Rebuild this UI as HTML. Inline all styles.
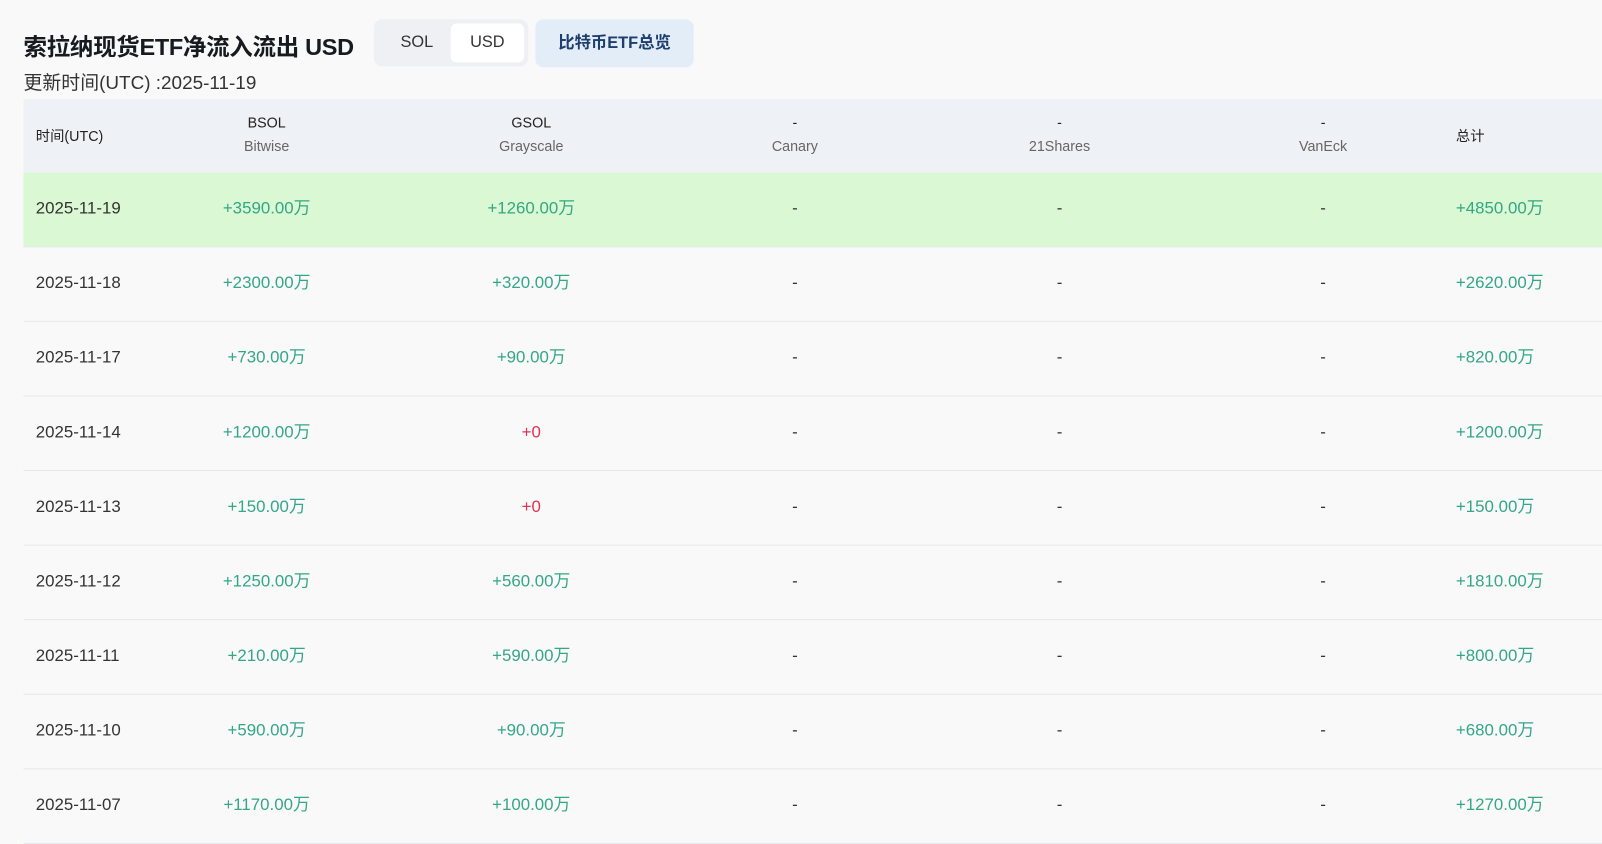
<!DOCTYPE html>
<html><head><meta charset="utf-8"><style>
*{margin:0;padding:0;box-sizing:border-box}
body{width:1602px;height:828px;overflow:hidden;background:#f9f9fa;font-family:"Liberation Sans","Noto Sans CJK SC",sans-serif;color:#222}
#w{position:absolute;left:0;top:0;width:1568px;height:811px;transform:scale(1.0217);transform-origin:0 0}
.t{position:absolute;left:23px;top:31px;font-size:23px;font-weight:bold;color:#181a20;line-height:30px;letter-spacing:-0.3px}
.sub{position:absolute;left:23px;top:69px;font-size:18.5px;color:#333;line-height:24px}
.seg{position:absolute;left:366px;top:19px;width:151px;height:46px;background:#eef0f3;border-radius:8px}
.seg span{position:absolute;top:4px;height:38px;line-height:38px;font-size:16px;color:#333;text-align:center}
.btc{position:absolute;left:524px;top:19px;width:155px;height:47px;background:#e3edf8;border-radius:8px;color:#1c3f6e;font-weight:bold;font-size:16px;line-height:47px;text-align:center}
.head{position:absolute;left:23px;top:97px;width:1579px;height:72px;background:#eef1f5}
.c{position:absolute;text-align:center;width:200px;transform:translateX(-100px);white-space:nowrap}
.h1{font-size:14px;color:#222;top:15px}
.h2{font-size:14px;color:#666;top:38px}
.row{position:absolute;left:23px;width:1579px;height:73px;border-bottom:1px solid #e6e8ea}
.row div{position:absolute;top:26px;font-size:16.5px;line-height:19px}
.g{color:#34a784}.r{color:#e0334f}.d{color:#333}
</style></head><body><div id="w">
<div class="t">索拉纳现货ETF净流入流出 USD</div>
<div class="sub">更新时间(UTC) :2025-11-19</div>
<div class="seg"><span style="left:6px;width:72px">SOL</span><span style="left:75px;width:72px;background:#fff;border-radius:6px">USD</span></div>
<div class="btc">比特币ETF总览</div>
<div class="head">
<div style="position:absolute;left:12px;top:26px;font-size:14px;color:#222">时间(UTC)</div>
<div class="c h1" style="left:238px">BSOL</div><div class="c h2" style="left:238px">Bitwise</div>
<div class="c h1" style="left:497px">GSOL</div><div class="c h2" style="left:497px">Grayscale</div>
<div class="c h1" style="left:755px">-</div><div class="c h2" style="left:755px">Canary</div>
<div class="c h1" style="left:1014px">-</div><div class="c h2" style="left:1014px">21Shares</div>
<div class="c h1" style="left:1272px">-</div><div class="c h2" style="left:1272px">VanEck</div>
<div style="position:absolute;left:1402px;top:26px;font-size:14px;color:#222">总计</div>
</div>
<div class="row" style="top:169px;background:#d9f8d3"><div class="d" style="left:12px">2025-11-19</div><div class="c g" style="left:238px">+3590.00万</div><div class="c g" style="left:497px">+1260.00万</div><div class="c d" style="left:755px">-</div><div class="c d" style="left:1014px">-</div><div class="c d" style="left:1272px">-</div><div class="g" style="left:1402px">+4850.00万</div></div>
<div class="row" style="top:242px"><div class="d" style="left:12px">2025-11-18</div><div class="c g" style="left:238px">+2300.00万</div><div class="c g" style="left:497px">+320.00万</div><div class="c d" style="left:755px">-</div><div class="c d" style="left:1014px">-</div><div class="c d" style="left:1272px">-</div><div class="g" style="left:1402px">+2620.00万</div></div>
<div class="row" style="top:315px"><div class="d" style="left:12px">2025-11-17</div><div class="c g" style="left:238px">+730.00万</div><div class="c g" style="left:497px">+90.00万</div><div class="c d" style="left:755px">-</div><div class="c d" style="left:1014px">-</div><div class="c d" style="left:1272px">-</div><div class="g" style="left:1402px">+820.00万</div></div>
<div class="row" style="top:388px"><div class="d" style="left:12px">2025-11-14</div><div class="c g" style="left:238px">+1200.00万</div><div class="c r" style="left:497px">+0</div><div class="c d" style="left:755px">-</div><div class="c d" style="left:1014px">-</div><div class="c d" style="left:1272px">-</div><div class="g" style="left:1402px">+1200.00万</div></div>
<div class="row" style="top:461px"><div class="d" style="left:12px">2025-11-13</div><div class="c g" style="left:238px">+150.00万</div><div class="c r" style="left:497px">+0</div><div class="c d" style="left:755px">-</div><div class="c d" style="left:1014px">-</div><div class="c d" style="left:1272px">-</div><div class="g" style="left:1402px">+150.00万</div></div>
<div class="row" style="top:534px"><div class="d" style="left:12px">2025-11-12</div><div class="c g" style="left:238px">+1250.00万</div><div class="c g" style="left:497px">+560.00万</div><div class="c d" style="left:755px">-</div><div class="c d" style="left:1014px">-</div><div class="c d" style="left:1272px">-</div><div class="g" style="left:1402px">+1810.00万</div></div>
<div class="row" style="top:607px"><div class="d" style="left:12px">2025-11-11</div><div class="c g" style="left:238px">+210.00万</div><div class="c g" style="left:497px">+590.00万</div><div class="c d" style="left:755px">-</div><div class="c d" style="left:1014px">-</div><div class="c d" style="left:1272px">-</div><div class="g" style="left:1402px">+800.00万</div></div>
<div class="row" style="top:680px"><div class="d" style="left:12px">2025-11-10</div><div class="c g" style="left:238px">+590.00万</div><div class="c g" style="left:497px">+90.00万</div><div class="c d" style="left:755px">-</div><div class="c d" style="left:1014px">-</div><div class="c d" style="left:1272px">-</div><div class="g" style="left:1402px">+680.00万</div></div>
<div class="row" style="top:753px"><div class="d" style="left:12px">2025-11-07</div><div class="c g" style="left:238px">+1170.00万</div><div class="c g" style="left:497px">+100.00万</div><div class="c d" style="left:755px">-</div><div class="c d" style="left:1014px">-</div><div class="c d" style="left:1272px">-</div><div class="g" style="left:1402px">+1270.00万</div></div>
</div></body></html>
